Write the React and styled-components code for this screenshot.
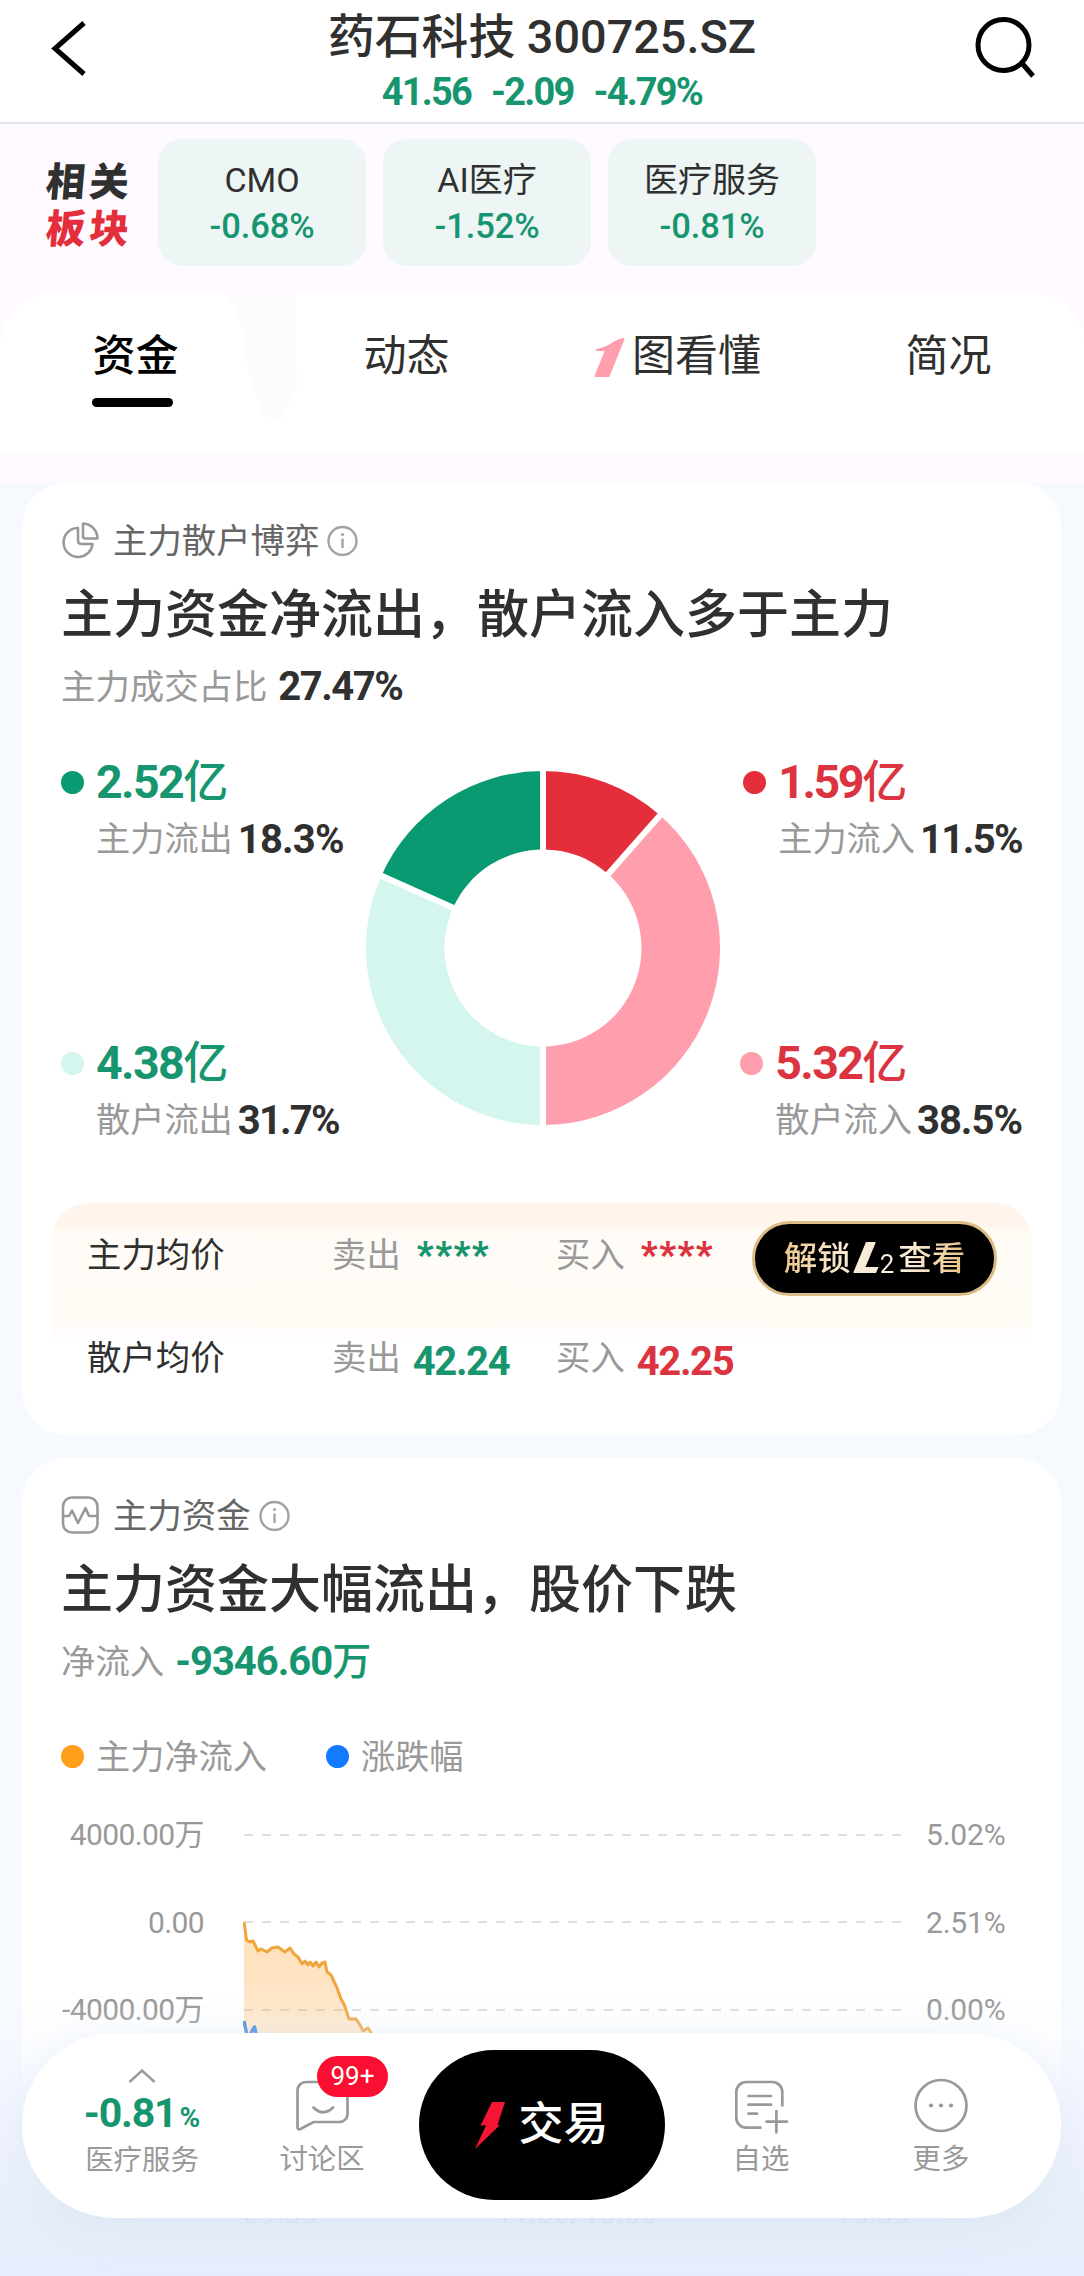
import React from "react";
import styled, { createGlobalStyle } from "styled-components";

const color = {
  green: "#16956f",
  greenSolid: "#0a9a72",
  greenPale: "#d5f6ee",
  red: "#db3340",
  redSolid: "#e52e3b",
  pink: "#ff9fad",
  ink: "#303030",
  mid: "#666",
  soft: "#999",
  strip: "#fefaff",
  page: "#f6faff",
};

const Global = createGlobalStyle`
  * { box-sizing: border-box; }
  html, body { margin: 0; padding: 0; }
  body {
    font-family: Roboto, "Noto Sans CJK SC", "Noto Sans", sans-serif;
    color: ${color.ink};
    background: ${color.page};
  }
  svg { display: block; flex: none; }
`;

const Screen = styled.div`
  position: relative;
  width: 1084px;
  height: 2276px;
  overflow: hidden;
  background: ${color.page};
`;

/* ---------- shared text ---------- */

const Num = styled.span`
  font-size: ${(p) => p.$size}px;
  font-weight: ${(p) => p.$weight || 700};
  letter-spacing: ${(p) => p.$track || 0}px;
  color: ${(p) => p.$color || "inherit"};
`;

/* ---------- header ---------- */

const Header = styled.header`
  display: grid;
  grid-template-columns: 140px 1fr 140px;
  height: 124px;
  background: #fff;
  border-bottom: 2px solid #dfe3e6;
`;

const HeaderSide = styled.div`
  display: flex;
  justify-content: ${(p) => (p.$end ? "flex-end" : "flex-start")};
  padding: ${(p) => (p.$end ? "16px 47px 0 0" : "20px 0 0 49px")};
`;

const HeaderTitle = styled.div`
  display: flex;
  flex-direction: column;
  align-items: center;
  padding-top: 7px;
`;

const StockName = styled.div`
  font-size: 46.8px;
  font-weight: 500;
  line-height: 60px;
  white-space: pre;
`;

const Quote = styled.div`
  display: flex;
  gap: 20px;
  font-size: 38px;
  font-weight: 700;
  line-height: 50px;
  letter-spacing: -1.8px;
  color: ${color.green};
`;

/* ---------- related sectors ---------- */

const Sectors = styled.section`
  display: flex;
  height: 169px;
  padding: 15px 0 0 46px;
  background: ${color.strip};
`;

const SectorMark = styled.div`
  width: 112px;
  padding-top: 20px;
  font-size: 39.5px;
  font-weight: 900;
  line-height: 47px;
  letter-spacing: 4px;
`;

const MarkLine = styled.div`
  width: 88px;
  color: ${(p) => (p.$red ? color.redSolid : color.ink)};
  transform: skewX(-5deg);
`;

const ChipRow = styled.div`
  display: flex;
  gap: 17px;
`;

const Chip = styled.div`
  width: 208px;
  height: 127px;
  padding-top: 18px;
  border-radius: 24px;
  background: #edf6f5;
  text-align: center;
  font-size: 34px;
  line-height: 46px;
`;

/* ---------- tabs ---------- */

const TabBar = styled.nav`
  position: relative;
  display: grid;
  grid-template-columns: repeat(4, 271px);
  height: 160px;
  padding-top: 33px;
  background: #fff;
  border-radius: 54px 54px 0 0;
`;

const TabStrip = styled.div`
  padding-bottom: 30px;
  background: ${color.strip};
`;

const TabNotch = styled.svg`
  position: absolute;
  left: 218px;
  top: 0;
`;

const Tab = styled.div`
  position: relative;
  display: flex;
  flex-direction: column;
  align-items: center;
  font-size: 43px;
  line-height: 60px;
  font-weight: ${(p) => (p.$active ? 500 : 400)};
  color: ${(p) => (p.$active ? "#000" : color.ink)};
`;

const TabLabel = styled.div`
  display: flex;
  align-items: center;
  gap: 6px;
`;

const Underline = styled.div`
  width: 81px;
  height: 9px;
  margin: 12px 6px 0 0;
  border-radius: 5px;
  background: #000;
`;

/* ---------- cards ---------- */

const Cards = styled.main`
  display: flex;
  flex-direction: column;
  gap: 23px;
  padding: 0 23px 0 22px;
`;

const Card = styled.section`
  height: ${(p) => p.$height}px;
  padding: 27px 39px 0;
  border-radius: 44px;
  background: #fff;
`;

const CardHead = styled.div`
  display: flex;
  align-items: center;
  height: 60px;
  font-size: 34.4px;
  color: ${color.mid};
`;

const HeadText = styled.span`
  margin: 0 8px 5px 14px;
`;

const CardTitle = styled.h2`
  margin: 11px 0 0;
  font-size: 52px;
  font-weight: 500;
  line-height: 70px;
  white-space: nowrap;
`;

const SubLine = styled.div`
  display: flex;
  align-items: center;
  gap: 11px;
  height: 50px;
  margin-top: 11px;
  font-size: 34.4px;
  line-height: 50px;
  color: ${color.soft};
`;

/* ---------- donut ---------- */

const DonutArea = styled.div`
  display: grid;
  grid-template-columns: 1fr 356px 1fr;
  height: 395px;
  margin-top: 42px;
`;

const DonutWrap = styled.div`
  padding: 16px 0 0 1px;
`;

const FlowColumn = styled.div`
  display: flex;
  flex-direction: column;
  justify-content: space-between;
  align-items: ${(p) => (p.$end ? "flex-end" : "flex-start")};
`;

const Flow = styled.div`
  display: grid;
  grid-template-columns: 35px auto;
  grid-auto-rows: 57px;
  align-items: center;
  line-height: 57px;
  white-space: nowrap;
`;

const Dot = styled.span`
  width: 23px;
  height: 23px;
  border-radius: 50%;
  background: ${(p) => p.$color};
`;

const FlowShare = styled.div`
  grid-column: 2;
  display: flex;
  gap: 5px;
  font-size: 34.2px;
  color: ${color.soft};
`;

/* ---------- average price ---------- */

const PriceTable = styled.div`
  margin: 54px -9px 0 -9px;
  border-radius: 36px 36px 0 0;
  background: linear-gradient(#fff5ec 0 22px, #fffaf0 26px, #fffcf7 34px, #fffcf6 122px, #fffbff 130px) no-repeat;
  background-size: 100% 136px;
`;

const PriceRow = styled.div`
  display: grid;
  grid-template-columns: 245px 224px 196px auto;
  align-items: center;
  height: 103px;
  padding-left: 35px;
  font-size: 34.4px;
  line-height: 60px;
`;

const PriceCell = styled.div`
  display: flex;
  align-items: center;
  gap: 12px;
  color: ${color.soft};
`;

const Price = styled(Num)`
  margin-top: 8px;
`;

const Stars = styled.span`
  margin: 0 0 0 4px;
  font-size: 36px;
  font-weight: 900;
  letter-spacing: 1.6px;
  color: ${(p) => p.$color};
`;

const Unlock = styled.button`
  display: flex;
  align-items: center;
  justify-content: center;
  width: 245px;
  height: 75px;
  margin-top: 8px;
  padding: 0;
  border: 3px solid #dcbc86;
  border-radius: 38px;
  background: #000;
  font: 500 33.5px/60px Roboto, "Noto Sans CJK SC", sans-serif;
`;

const GoldText = styled.span`
  display: flex;
  align-items: center;
  color: transparent;
  background: ${(p) =>
    p.$tail
      ? "linear-gradient(90deg, #fbefdc 30%, #e9c285)"
      : "linear-gradient(90deg, #efc88c, #fbefdc)"};
  background-clip: text;
  -webkit-background-clip: text;
`;

const LevelTwo = styled.span`
  margin: 0 4px 0 0;
  padding-top: 10px;
  font-size: 26px;
  font-weight: 400;
`;

/* ---------- fund chart ---------- */

const Legend = styled.div`
  display: flex;
  gap: 59px;
  height: 50px;
  margin-top: 44px;
  font-size: 34.2px;
  color: ${color.soft};
`;

const LegendItem = styled.div`
  display: flex;
  align-items: center;
  gap: 12px;
`;

const LegendText = styled.span`
  margin-bottom: 4px;
`;

const Chart = styled.div`
  display: grid;
  grid-template-columns: 143px 660px auto;
  column-gap: 39px;
  margin-top: 10px;
`;

const Axis = styled.div`
  display: flex;
  flex-direction: column;
  margin-left: ${(p) => (p.$right ? -16 : -4)}px;
  text-align: ${(p) => (p.$right ? "left" : "right")};
  font-size: 30px;
  line-height: 87.5px;
  letter-spacing: ${(p) => (p.$right ? -0.2 : -0.6)}px;
  white-space: nowrap;
  color: ${color.soft};
`;

const Times = styled.div`
  grid-column: 2;
  display: flex;
  justify-content: space-between;
  width: 667px;
  font-size: 30px;
  line-height: 40px;
  color: #808080;
`;

/* ---------- bottom bar ---------- */

const Fade = styled.div`
  position: absolute;
  left: 0;
  right: 0;
  bottom: 0;
  height: 276px;
  background: linear-gradient(
    rgba(252, 250, 255, 0),
    rgba(246, 247, 255, 0.2) 12%,
    rgba(240, 242, 255, 0.7) 45%,
    rgba(231, 238, 248, 0.92) 78%,
    rgba(229, 237, 254, 0.96)
  );
`;

const BottomBar = styled.nav`
  position: absolute;
  left: 22px;
  right: 23px;
  top: 2033px;
  display: grid;
  grid-template-columns: 180px 180px 1fr 180px 180px;
  height: 185px;
  padding: 0 30px;
  border-radius: 93px;
  background: #fff;
  box-shadow: 0 8px 44px rgba(190, 215, 236, 0.36);
`;

const BarItem = styled.div`
  position: relative;
  display: flex;
  flex-direction: column;
  align-items: center;
  padding-top: ${(p) => (p.$quote ? 36 : 42)}px;
`;

const BarLabel = styled.div`
  margin-top: 5px;
  font-size: 28.4px;
  line-height: 40px;
  color: ${color.soft};
`;

const BarQuote = styled.div`
  display: flex;
  align-items: baseline;
  gap: 3px;
  height: 50px;
  margin-top: 3px;
  line-height: 54px;
  color: ${color.green};
`;

const Badge = styled.span`
  position: absolute;
  left: 85px;
  top: 23px;
  width: 71px;
  height: 41px;
  border-radius: 21px;
  background: #fa0f32;
  color: #fff;
  text-align: center;
  font-size: 26px;
  line-height: 41px;
`;

const TradeButton = styled.button`
  display: flex;
  align-items: center;
  gap: 14px;
  justify-self: center;
  width: 246px;
  height: 150px;
  margin-top: 17px;
  padding: 0 0 0 56px;
  border: 0;
  border-radius: 75px;
  background: #000;
  color: #fff;
  font: 500 45px/60px Roboto, "Noto Sans CJK SC", sans-serif;
`;

/* ---------- icons ---------- */

const BackIcon = () => (
  <svg width="38" height="57" viewBox="0 0 38 57" fill="none" stroke="#000" strokeWidth="5">
    <path d="M35 3L6 28.500L35 54" strokeLinejoin="miter" />
  </svg>
);

const SearchIcon = () => (
  <svg width="62" height="64" viewBox="0 0 62 64" fill="none" stroke="#000" strokeWidth="5">
    <circle cx="28.500" cy="29" r="25.500" />
    <path d="M46 46L58 60" strokeLinecap="butt" />
  </svg>
);

const PieIcon = () => (
  <svg width="38" height="38" viewBox="0 0 38 38" fill="none" stroke="#999" strokeWidth="2.600" strokeLinejoin="round">
    <path d="M16.500 7A14.500 14.500 0 1 0 31.500 23H20.500Q17 23 17 19.500V7z" />
    <path d="M22 2.500V15Q22 17.500 24.500 17.500H36.500A15 15 0 0 0 22 2.500z" />
  </svg>
);

const PulseIcon = () => (
  <svg width="38" height="40" viewBox="0 0 38 40" fill="none" stroke="#999" strokeWidth="2.600" strokeLinejoin="round">
    <rect x="2" y="2.500" width="34.500" height="35" rx="9" />
    <path d="M3 21H8L11 15.500L17 28L24.500 13L28 21H36" />
  </svg>
);

const InfoIcon = () => (
  <svg width="31" height="32" viewBox="0 0 31 32" fill="none" stroke="#a3a3a3" strokeWidth="2.400">
    <circle cx="15.500" cy="17" r="14" />
    <path d="M15.500 14.500V24" />
    <circle cx="15.500" cy="10.500" r="1.500" fill="#a3a3a3" stroke="none" />
  </svg>
);

const OneIcon = () => (
  <svg width="32" height="44" viewBox="0 0 32 44" fill="#ff9fad" stroke="#ff9fad" strokeWidth="2" strokeLinejoin="round">
    <path d="M29.500 5L14.500 42H1.500L12 16H3Q15 13 20 8.500Q24 6 29.500 5z" />
  </svg>
);

const SlantL = () => (
  <svg width="29" height="36" viewBox="-3 0 29 36">
    <path d="M12 1H21Q22 1 21.500 2L11.500 26H24.500L22 32H0Q-1 32 -0.500 31z" fill="#f8ecd8" />
  </svg>
);

const ChevronIcon = () => (
  <svg width="28" height="14" viewBox="0 0 28 14" fill="none" stroke="#999" strokeWidth="2.400">
    <path d="M1.500 13L14 1.500L26.500 13" />
  </svg>
);

const ChatIcon = () => (
  <svg width="60" height="60" viewBox="0 0 60 60" fill="none" stroke="#999" strokeWidth="2.700">
    <path d="M14 7H47a8.500 8.500 0 0 1 8.500 8.500V39a8 8 0 0 1-8 8H21.500L8.500 54Q5.500 55.300 5.500 52V15.500a8.500 8.500 0 0 1 8.500-8.500z" />
    <path d="M21.500 32.500Q31 42 41 32.500" strokeLinecap="round" />
  </svg>
);

const ListAddIcon = () => (
  <svg width="60" height="60" viewBox="0 0 60 60" fill="none" stroke="#999" strokeWidth="2.700" strokeLinecap="round">
    <path d="M51.300 30.500V17a10 10 0 0 0-10-10H15.300a10 10 0 0 0-10 10V42.700a10 10 0 0 0 10 10H29.500" />
    <path d="M17.500 21H40M17.500 29.700H40M17.500 38.700H26" />
    <path d="M35.500 46.700H56M45.400 36V57.500" />
  </svg>
);

const MoreIcon = () => (
  <svg width="60" height="60" viewBox="0 0 60 60" fill="#999">
    <circle cx="30" cy="30.500" r="25.500" fill="none" stroke="#999" strokeWidth="2.700" />
    <circle cx="20" cy="30.500" r="2.100" />
    <circle cx="30" cy="30.500" r="2.100" />
    <circle cx="40" cy="30.500" r="2.100" />
  </svg>
);

const BoltIcon = () => (
  <svg width="30" height="47" viewBox="0 0 30 47">
    <path d="M17 0H30L22.500 23H25L0 47L11 23.500H5.500z" fill="#f51433" />
  </svg>
);

/* ---------- donut drawing ---------- */

const slices = [
  { share: 11.5, fill: color.redSolid },
  { share: 38.5, fill: color.pink },
  { share: 31.7, fill: color.greenPale },
  { share: 18.3, fill: color.greenSolid },
];

const polar = (r, pct) => {
  const a = (pct / 100) * Math.PI * 2;
  return [178 + r * Math.sin(a), 178 - r * Math.cos(a)];
};

const Donut = () => {
  let start = 0;
  const parts = slices.map((s) => {
    const from = start;
    start += s.share;
    return { ...s, from, to: start };
  });
  return (
    <svg width="356" height="356" viewBox="0 0 356 356">
      {parts.map((s) => {
        const [x1, y1] = polar(177, s.from);
        const [x2, y2] = polar(177, s.to);
        const [x3, y3] = polar(98.5, s.to);
        const [x4, y4] = polar(98.5, s.from);
        return (
          <path
            key={s.fill}
            fill={s.fill}
            d={`M${x1} ${y1}A177 177 0 0 1 ${x2} ${y2}L${x3} ${y3}A98.5 98.5 0 0 0 ${x4} ${y4}z`}
          />
        );
      })}
      {parts.map((s) => {
        const [x1, y1] = polar(96, s.from);
        const [x2, y2] = polar(180, s.from);
        return <line key={s.fill} x1={x1} y1={y1} x2={x2} y2={y2} stroke="#fff" strokeWidth="6" />;
      })}
    </svg>
  );
};

/* ---------- line chart drawing ---------- */

const fundLine =
  "1,131 2,138 3.5,149 7,151 10,150 12,154 15,160 18,158 24,161 29,157 35,156 42,161 47,157 51,163 55,166 59,173 62,170 65,174 67,171 70,175 73,171 76,176 79,172 82,171 84,181 88,184 94,197 98,208 101,213 106,228 113,228 117,234 120,240 125,237 129,243 145,270 260,310 400,330 660,350";
const priceLine = "1,230 4,244 6,248 9,240 11.5,236 14,246 30,275 90,300 240,320 660,330";

const Plot = () => (
  <svg width="660" height="402" viewBox="0 0 660 402" fill="none">
    <defs>
      <linearGradient id="fund" x1="0" y1="131" x2="0" y2="400" gradientUnits="userSpaceOnUse">
        <stop offset="0" stopColor="#fda63b" stopOpacity="0.36" />
        <stop offset="1" stopColor="#fda63b" stopOpacity="0.1" />
      </linearGradient>
    </defs>
    {[44, 131, 219].map((y) => (
      <path key={y} d={`M1 ${y}H660`} stroke="#dedede" strokeWidth="2" strokeDasharray="9 9" />
    ))}
    <polygon points={`${fundLine} 660,400 1,400`} fill="url(#fund)" />
    <polyline points={fundLine} stroke="#f0a53c" strokeWidth="3" strokeLinejoin="round" />
    <polyline points={priceLine} stroke="#3d86e4" strokeWidth="3.4" strokeLinejoin="round" />
  </svg>
);

/* ---------- page ---------- */

const FlowItem = ({ dot, tone, amount, amountTrack = -1.6, label, share, shareTrack }) => (
  <Flow>
    <Dot $color={dot} />
    <Num $size={46.5} $track={amountTrack} $color={tone}>
      {amount}
      <Num $size={45} $weight={500}>亿</Num>
    </Num>
    <FlowShare>
      {label}
      <Num $size={40} $track={shareTrack} $color={color.ink}>{share}</Num>
    </FlowShare>
  </Flow>
);

const sectors = [
  ["CMO", "-0.68%"],
  ["AI医疗", "-1.52%"],
  ["医疗服务", "-0.81%"],
];

export default function App() {
  return (
    <Screen>
      <Global />
      <Header>
        <HeaderSide><BackIcon /></HeaderSide>
        <HeaderTitle>
          <StockName>药石科技 300725.SZ</StockName>
          <Quote><span>41.56</span><span>-2.09</span><span>-4.79%</span></Quote>
        </HeaderTitle>
        <HeaderSide $end><SearchIcon /></HeaderSide>
      </Header>

      <Sectors>
        <SectorMark>
          <MarkLine>相关</MarkLine>
          <MarkLine $red>板块</MarkLine>
        </SectorMark>
        <ChipRow>
          {sectors.map(([name, change]) => (
            <Chip key={name}>
              <div>{name}</div>
              <Num $size={34.5} $weight={500} $track={-0.1} $color={color.green}>{change}</Num>
            </Chip>
          ))}
        </ChipRow>
      </Sectors>

      <TabStrip>
        <TabBar>
          <TabNotch width="86" height="126" viewBox="0 0 86 126">
            <path d="M0 0Q20 6 24 40Q28 75 38 100Q42 125 52 125H66Q70 110 80 95Q76 50 78 0z" fill="#fefbff" />
          </TabNotch>
          <Tab $active>
            <TabLabel>资金</TabLabel>
            <Underline />
          </Tab>
          <Tab><TabLabel>动态</TabLabel></Tab>
          <Tab><TabLabel><OneIcon />图看懂</TabLabel></Tab>
          <Tab><TabLabel>简况</TabLabel></Tab>
        </TabBar>
      </TabStrip>

      <Cards>
        <Card $height={952}>
          <CardHead><PieIcon /><HeadText>主力散户博弈</HeadText><InfoIcon /></CardHead>
          <CardTitle>主力资金净流出，散户流入多于主力</CardTitle>
          <SubLine>
            主力成交占比
            <Num $size={40} $track={-1.5} $color={color.ink}>27.47%</Num>
          </SubLine>

          <DonutArea>
            <FlowColumn>
              <FlowItem dot={color.greenSolid} tone={color.green} amount="2.52" label="主力流出" share="18.3%" shareTrack={-0.8} />
              <FlowItem dot={color.greenPale} tone={color.green} amount="4.38" label="散户流出" share="31.7%" shareTrack={-1.8} />
            </FlowColumn>
            <DonutWrap><Donut /></DonutWrap>
            <FlowColumn $end>
              <FlowItem dot={color.redSolid} tone={color.red} amount="1.59" amountTrack={-2.4} label="主力流入" share="11.5%" shareTrack={-1.6} />
              <FlowItem dot={color.pink} tone={color.red} amount="5.32" label="散户流入" share="38.5%" shareTrack={-1} />
            </FlowColumn>
          </DonutArea>

          <PriceTable>
            <PriceRow>
              <span>主力均价</span>
              <PriceCell>卖出<Stars $color={color.green}>****</Stars></PriceCell>
              <PriceCell>买入<Stars $color={color.red}>****</Stars></PriceCell>
              <Unlock>
                <GoldText>解锁</GoldText>
                <SlantL />
                <GoldText $tail><LevelTwo>2</LevelTwo>查看</GoldText>
              </Unlock>
            </PriceRow>
            <PriceRow>
              <span>散户均价</span>
              <PriceCell>卖出<Price $size={40} $track={-1.4} $color={color.green}>42.24</Price></PriceCell>
              <PriceCell>买入<Price $size={40} $track={-1.4} $color={color.red}>42.25</Price></PriceCell>
            </PriceRow>
          </PriceTable>
        </Card>

        <Card $height={860}>
          <CardHead><PulseIcon /><HeadText>主力资金</HeadText><InfoIcon /></CardHead>
          <CardTitle>主力资金大幅流出，股价下跌</CardTitle>
          <SubLine>
            净流入
            <Num $size={40} $track={-1} $color={color.green}>
              -9346.60<Num $size={39} $weight={500}>万</Num>
            </Num>
          </SubLine>
          <Legend>
            <LegendItem><Dot $color="#ff9f1a" /><LegendText>主力净流入</LegendText></LegendItem>
            <LegendItem><Dot $color="#127bff" /><LegendText>涨跌幅</LegendText></LegendItem>
          </Legend>
          <Chart>
            <Axis><span>4000.00万</span><span>0.00</span><span>-4000.00万</span></Axis>
            <Plot />
            <Axis $right><span>5.02%</span><span>2.51%</span><span>0.00%</span></Axis>
            <Times><span>09:30</span><span>11:30/13:00</span><span>15:00</span></Times>
          </Chart>
        </Card>
      </Cards>

      <Fade />
      <BottomBar>
        <BarItem $quote>
          <ChevronIcon />
          <BarQuote>
            <Num $size={41} $track={-1.2}>-0.81</Num>
            <Num $size={28}>%</Num>
          </BarQuote>
          <BarLabel $quote>医疗服务</BarLabel>
        </BarItem>
        <BarItem>
          <ChatIcon />
          <Badge>99+</Badge>
          <BarLabel>讨论区</BarLabel>
        </BarItem>
        <TradeButton><BoltIcon />交易</TradeButton>
        <BarItem><ListAddIcon /><BarLabel>自选</BarLabel></BarItem>
        <BarItem><MoreIcon /><BarLabel>更多</BarLabel></BarItem>
      </BottomBar>
    </Screen>
  );
}
